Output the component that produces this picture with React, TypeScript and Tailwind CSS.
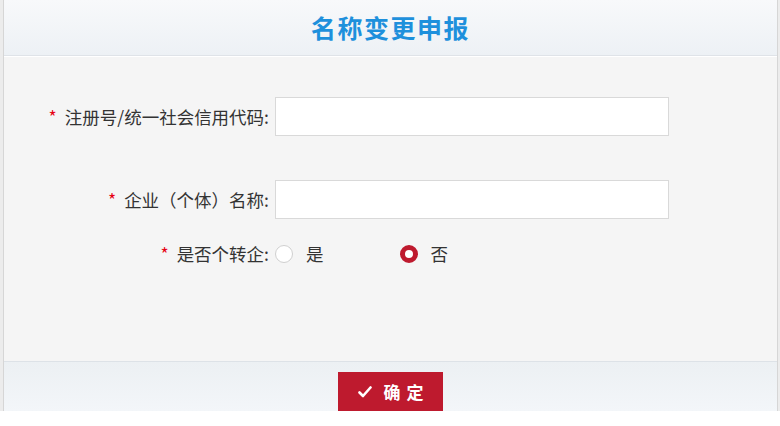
import { useState } from 'react'

const FONT = { fontFamily: '"Microsoft YaHei", "Noto Sans CJK SC", "Noto Sans", sans-serif' }

function Label({ text }: { text: string }) {
  return (
    <div className="w-[271px] shrink-0 text-right pr-[6px] text-[17.5px] text-[#333] leading-none">
      <span className="text-[#e60012] mr-[8px]">*</span>
      {text}
    </div>
  )
}

function Radio({ checked, label, onClick }: { checked: boolean; label: string; onClick: () => void }) {
  return (
    <button type="button" onClick={onClick} className="flex items-center gap-[13px] text-[17.5px] text-[#333]">
      {checked ? (
        <span className="w-[18px] h-[18px] rounded-full border-[5px] border-[#be1a2e] bg-white" />
      ) : (
        <span className="w-[18px] h-[18px] rounded-full border border-[#d0d0d0] bg-white" />
      )}
      <span className="leading-none">{label}</span>
    </button>
  )
}

export default function App() {
  const [transfer, setTransfer] = useState(false)

  return (
    <div className="w-[780px] bg-white" style={FONT}>
      <div className="bg-[#ececec] pl-[3px] pr-[2px]">
        <div className="border-x border-[#d6d6d6] flex flex-col">
          {/* Header */}
          <div className="h-[56px] bg-gradient-to-b from-[#f8f9fb] to-[#edf1f5] border-b border-[#dfe3e8] flex items-center justify-center">
            <h1 className="text-[25px] font-bold text-[#1e90dc] tracking-[1.5px]">名称变更申报</h1>
          </div>

          {/* Body */}
          <div className="h-[305px] bg-[#f5f5f5] border-t border-white pt-[40px]">
            <div className="flex items-center">
              <Label text="注册号/统一社会信用代码:" />
              <input className="w-[394px] h-[39px] bg-white border border-[#d9d9d9] outline-none px-2" />
            </div>
            <div className="flex items-center mt-[44px]">
              <Label text="企业（个体）名称:" />
              <input className="w-[394px] h-[39px] bg-white border border-[#d9d9d9] outline-none px-2" />
            </div>
            <div className="flex items-center mt-[19px] h-[32px]">
              <Label text="是否个转企:" />
              <div className="flex items-center gap-[76px]">
                <Radio checked={transfer} label="是" onClick={() => setTransfer(true)} />
                <Radio checked={!transfer} label="否" onClick={() => setTransfer(false)} />
              </div>
            </div>
          </div>

          {/* Footer */}
          <div className="h-[50px] bg-gradient-to-b from-[#ecf0f3] to-[#f3f6f9] border-t border-[#dde2e7] pt-[10px] flex justify-center">
            <button
              type="button"
              className="w-[105px] h-[39px] bg-[#be1a2e] text-white font-bold text-[17px] flex items-center justify-center gap-[12px]"
            >
              <svg width="14" height="12" viewBox="0 0 14 12" fill="none">
                <path d="M1.5 6.5 L5 10 L12.5 1.5" stroke="white" strokeWidth="2.6" strokeLinecap="round" strokeLinejoin="round" />
              </svg>
              <span className="tracking-[6px] -mr-[6px]">确定</span>
            </button>
          </div>
        </div>
      </div>
    </div>
  )
}
